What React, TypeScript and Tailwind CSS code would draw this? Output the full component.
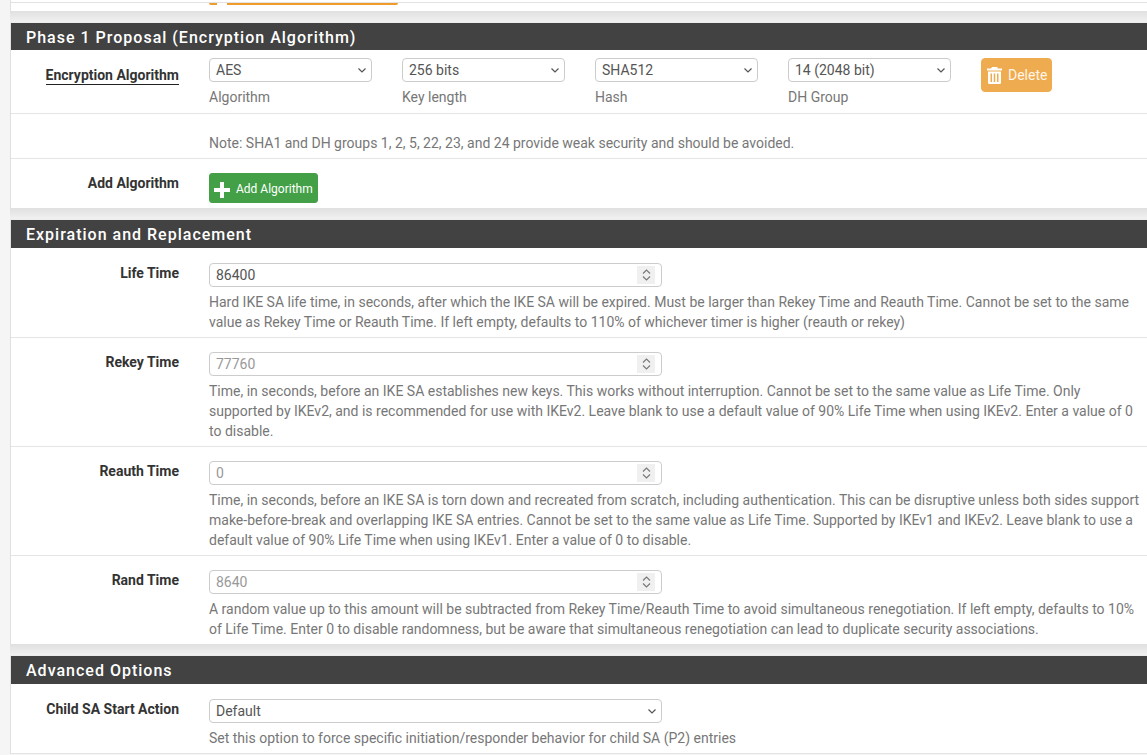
import React from "react";

const Chevron = () => (
  <svg width="8" height="5" viewBox="0 0 8 5" className="shrink-0" fill="none" stroke="#555" strokeWidth="1.2">
    <path d="M.5.5L4 4 7.500.5" />
  </svg>
);

const Select = ({ value, w }: { value: string; w: string }) => (
  <div className={`flex h-[24px] items-center justify-between rounded-[4px] border border-[#ccc] bg-white pl-[6px] pr-[5px] text-[14px] leading-[20px] text-[#555] ${w}`}>
    <span>{value}</span>
    <Chevron />
  </div>
);

const Header = ({ title, h }: { title: string; h: string }) => (
  <div className={`bg-[#424242] pl-[15px] pt-[5px] text-[16px] font-medium leading-[20px] tracking-[1px] text-white ${h}`}>
    {title}
  </div>
);

const Panel = ({ children }: { children: React.ReactNode }) => (
  <section className="border-l border-[#e0e0e0] bg-white">{children}</section>
);

const Gap = () => <div className="h-[12px] border-b border-[#ececec] bg-gradient-to-b from-[#e0e0e0] to-[#f1f1f1]" />;

const Label = ({ children }: { children: React.ReactNode }) => (
  <div className="w-[168px] shrink-0 text-right text-[14px] font-bold leading-[20px] text-[#333]">{children}</div>
);

const Spinner = () => (
  <div className="absolute right-[7px] top-[3px] flex h-[18px] w-[18px] flex-col items-center justify-center gap-[2px] bg-[#f0f0f0]">
    <svg width="9" height="5" viewBox="0 0 9 5" fill="none" stroke="#777" strokeWidth="1.1"><path d="M1 4.500l3.500-3.500 3.500 3.500" /></svg>
    <svg width="9" height="5" viewBox="0 0 9 5" fill="none" stroke="#777" strokeWidth="1.1"><path d="M1 .5l3.500 3.500 3.500-3.500" /></svg>
  </div>
);

const TimeRow = ({ label, value, placeholder, help, cls }: { label: string; value?: string; placeholder?: string; help: React.ReactNode; cls: string }) => (
  <div className={`flex gap-[30px] ${cls}`}>
    <Label>{label}</Label>
    <div className="w-[935px] shrink-0">
      <div className="relative h-[24px] w-[453px]">
        <input
          readOnly
          value={value ?? ""}
          placeholder={placeholder}
          className="h-full w-full rounded-[4px] border border-[#ccc] bg-white px-[6px] text-[14px] text-[#555] outline-none placeholder:text-[#999]"
        />
        <Spinner />
      </div>
      <p className="mt-[5px] text-[14px] leading-[20px] text-[#777]">{help}</p>
    </div>
  </div>
);

export default function App() {
  return (
    <div className="h-[755px] w-[1147px] overflow-hidden bg-[#f5f5f5] font-['Roboto',sans-serif]">
      <div className="ml-[10px] flex flex-col">
        <div className="h-[11px] border-l border-[#e0e0e0] bg-white pt-[2px]">
          <div className="border-t border-[#e2e2e2] pl-[198px]">
            <div className="flex h-[2px] w-[189px] rounded-b-[3px] bg-[#ef9c2a] pl-[8px]">
              <div className="h-[2px] w-[10px] bg-white" />
            </div>
          </div>
        </div>
        <Gap />

        <Panel>
          <Header title="Phase 1 Proposal (Encryption Algorithm)" h="h-[27px]" />
          <div className="flex h-[64px] gap-[30px] border-b border-[#e5e5e5] pt-[8px]">
            <div className="w-[168px] shrink-0 pt-[7px] text-right text-[14px] font-bold leading-[20px] text-[#333]">
              <span className="border-b border-[#222] pb-[1px]">Encryption Algorithm</span>
            </div>
            <div className="flex gap-[30px]">
              {[["AES", "Algorithm"], ["256 bits", "Key length"], ["SHA512", "Hash"], ["14 (2048 bit)", "DH Group"]].map(([v, l]) => (
                <div key={l} className="w-[163px]">
                  <Select value={v} w="w-[163px]" />
                  <div className="mt-[5px] text-[14px] leading-[20px] text-[#777]">{l}</div>
                </div>
              ))}
              <button className="flex h-[34px] w-[71px] items-center gap-[6px] rounded-[4px] border border-[#efab4f] bg-[#efab4f] pl-[5px] text-[14px] leading-[20px] text-[#fff5e6]">
                <svg width="15" height="17" viewBox="0 0 15 17" fill="white">
                  <path d="M5 0h5l1 1.500h4v2H0v-2h4zM1 4.500h13v11A1.500 1.500 0 0 1 12.500 17h-10A1.500 1.500 0 0 1 1 15.500zm2.500 2v8.500h1.500V6.500zm3.250 0v8.500h1.500V6.500zm3.250 0v8.500h1.500V6.500z" />
                </svg>
                Delete
              </button>
            </div>
          </div>
          <div className="flex h-[45px] gap-[30px] border-b border-[#e5e5e5] pt-[19px]">
            <div className="w-[168px] shrink-0" />
            <p className="text-[14px] leading-[20px] text-[#777]">Note: SHA1 and DH groups 1, 2, 5, 22, 23, and 24 provide weak security and should be avoided.</p>
          </div>
          <div className="flex h-[49px] gap-[30px] pt-[14px]">
            <Label>Add Algorithm</Label>
            <button className="flex h-[30px] w-[109px] items-center gap-[6px] rounded-[3px] border border-[#43a047] bg-[#43a047] pl-[4px] text-[12px] leading-[18px] text-white">
              <svg width="16" height="16" viewBox="0 0 16 16" fill="white" className="translate-y-[2px]"><path d="M6 0h4v6h6v4h-6v6H6v-6H0V6h6z" /></svg>
              <span className="pt-[1px]">Add Algorithm</span>
            </button>
          </div>
        </Panel>
        <Gap />

        <Panel>
          <Header title="Expiration and Replacement" h="h-[28px]" />
          <TimeRow cls="h-[90px] border-b border-[#e5e5e5] pt-[15px]" label="Life Time" value="86400" help={<>Hard IKE SA life time, in seconds, after which the IKE SA will be expired. Must be larger than Rekey Time and Reauth Time. Cannot be set to the same value as Rekey Time or Reauth Time. If left empty, defaults to 110% of whichever timer is higher (reauth or rekey)</>} />
          <TimeRow cls="h-[109px] border-b border-[#e5e5e5] pt-[14px]" label="Rekey Time" placeholder="77760" help={<>Time, in seconds, before an IKE SA establishes new keys. This works without interruption. Cannot be set to the same value as Life Time. Only supported by IKEv2, and is recommended for use with IKEv2. Leave blank to use a default value of 90% Life Time when using IKEv2. Enter a value of 0 to disable.</>} />
          <TimeRow cls="h-[109px] border-b border-[#e5e5e5] pt-[14px]" label="Reauth Time" placeholder="0" help={<>Time, in seconds, before an IKE SA is torn down and recreated from scratch, including authentication. This can be disruptive unless both sides support make-before-break and overlapping IKE SA entries. Cannot be set to the same value as Life Time. Supported by IKEv1 and IKEv2. Leave blank to use a default value of 90% Life Time when using IKEv1. Enter a value of 0 to disable.</>} />
          <TimeRow cls="h-[88px] pt-[14px]" label="Rand Time" placeholder="8640" help={<>A random value up to this amount will be subtracted from Rekey Time/Reauth Time to avoid simultaneous renegotiation. If left empty, defaults to 10% of Life Time. Enter 0 to disable randomness, but be aware that simultaneous renegotiation can lead to duplicate security associations.</>} />
        </Panel>
        <Gap />

        <Panel>
          <Header title="Advanced Options" h="h-[28px]" />
          <div className="flex h-[70px] gap-[30px] border-b border-[#e5e5e5] pt-[15px]">
            <Label>Child SA Start Action</Label>
            <div>
              <Select value="Default" w="w-[453px]" />
              <p className="mt-[5px] text-[14px] leading-[20px] text-[#777]">Set this option to force specific initiation/responder behavior for child SA (P2) entries</p>
            </div>
          </div>
        </Panel>
      </div>
    </div>
  );
}
